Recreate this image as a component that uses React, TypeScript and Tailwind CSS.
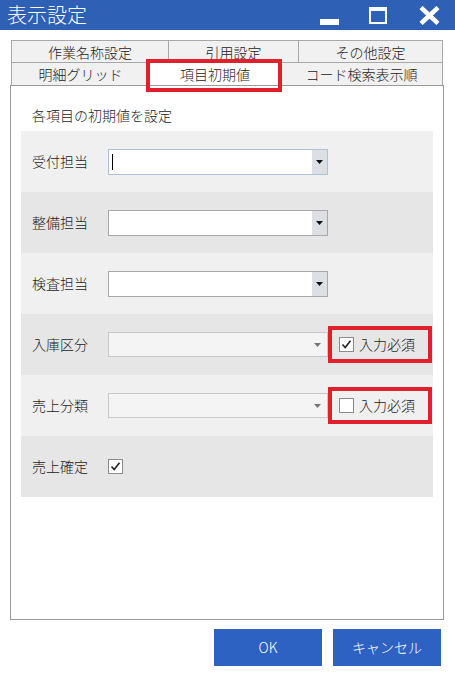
import React from 'react';

const FONT = { fontFamily: '"Noto Sans CJK JP", "Noto Sans", sans-serif' };

type Row = {
  label: string;
  kind: 'select' | 'check';
  focused?: boolean;
  disabled?: boolean;
  required?: boolean;
};

const rows: Row[] = [
  { label: '受付担当', kind: 'select', focused: true },
  { label: '整備担当', kind: 'select' },
  { label: '検査担当', kind: 'select' },
  { label: '入庫区分', kind: 'select', disabled: true, required: true },
  { label: '売上分類', kind: 'select', disabled: true, required: false },
  { label: '売上確定', kind: 'check' },
];

const Check = ({ checked }: { checked: boolean }) => (
  <div className="w-[15px] h-[15px] border border-[#8a8a8a] bg-white flex items-center justify-center">
    {checked && (
      <svg width="11" height="11" viewBox="0 0 11 11">
        <path d="M1.5 5.5 L4.2 8.5 L9.5 1.8" fill="none" stroke="#222" strokeWidth="1.6" />
      </svg>
    )}
  </div>
);

const Select = ({ focused, disabled }: { focused?: boolean; disabled?: boolean }) => {
  if (disabled) {
    return (
      <div className="w-[220px] h-[25px] border border-[#c8c8c8] bg-[#f4f4f4] flex items-center justify-end pr-[6px]">
        <svg width="7" height="4" viewBox="0 0 7 4">
          <path d="M0 0 H7 L3.5 4 Z" fill="#777" />
        </svg>
      </div>
    );
  }
  return (
    <div
      className={
        'w-[220px] h-[26px] border bg-white flex items-stretch ' +
        (focused ? 'border-[#a9c1d9]' : 'border-[#a8a8a8]')
      }
    >
      <div className="flex-1 flex items-center pl-[3px]">
        {focused && <div className="w-[1px] h-[16px] bg-black" />}
      </div>
      <div className="w-[15px] bg-[#dcdfe3] flex items-center justify-center">
        <svg width="7" height="4" viewBox="0 0 7 4">
          <path d="M0 0 H7 L3.5 4 Z" fill="#111" />
        </svg>
      </div>
    </div>
  );
};

export default function App() {
  return (
    <div className="w-[455px] h-[677px] bg-white relative overflow-hidden font-light" style={FONT}>
      {/* title bar */}
      <div className="h-[30px] bg-[#2e60b6] flex items-center justify-between">
        <span className="text-white text-[20px] leading-none pl-[7px]">表示設定</span>
        <div className="flex items-center h-full">
          <div className="w-[19px] h-[6px] bg-white mt-[14px] mr-[30px]" />
          <div className="w-[18px] h-[17px] border-2 border-t-[4px] border-white mr-[32px]" />
          <svg width="21" height="19" viewBox="0 0 21 19" className="mr-[15px]">
            <path d="M2 1.5 L19 17.5 M19 1.5 L2 17.5" stroke="#fff" strokeWidth="4.5" />
          </svg>
        </div>
      </div>

      {/* tabs */}
      <div className="mt-[10px] ml-[11px] w-[432px] text-[14px] text-[#222] leading-none">
        <div className="flex h-[22px] border border-b-0 border-[#a8a8a8]">
          <div className="w-[157px] flex items-center justify-center bg-[#f1f1f1] border-r border-[#a8a8a8]">作業名称設定</div>
          <div className="w-[130px] flex items-center justify-center bg-[#f1f1f1] border-r border-[#a8a8a8]">引用設定</div>
          <div className="flex-1 flex items-center justify-center bg-[#f1f1f1]">その他設定</div>
        </div>
        <div className="flex h-[23px] border-x border-t border-[#a8a8a8]">
          <div className="w-[137px] flex items-center justify-center bg-[#f1f1f1]">明細グリッド</div>
          <div className="w-[132px] flex items-center justify-center bg-white relative">
            項目初期値
            <div className="absolute left-[-3px] right-[-1px] top-[-4px] bottom-[-7px] border-[4px] border-[#e0202b]" />
          </div>
          <div className="flex-1 flex items-center justify-center bg-[#f1f1f1]">コード検索表示順</div>
        </div>
      </div>

      {/* panel */}
      <div className="ml-[10px] w-[434px] h-[535px] border border-[#9a9a9a] bg-white px-[10px]">
        <div className="h-[45px] flex items-center pl-[11px] text-[14px] text-[#222] pt-[14px]">各項目の初期値を設定</div>
        <div className="flex flex-col">
          {rows.map((r, i) => (
            <div
              key={r.label}
              className={'h-[61px] flex items-center pl-[11px] ' + (i % 2 === 0 ? 'bg-[#f0f0f0]' : 'bg-[#e6e6e6]')}
            >
              <span className="w-[76px] text-[14px] text-[#222]">{r.label}</span>
              {r.kind === 'select' ? (
                <>
                  <Select focused={r.focused} disabled={r.disabled} />
                  {r.required !== undefined && (
                    <div className="w-[104px] h-[37px] border-[4px] border-[#e0202b] flex items-center pl-[7px] gap-[5px]">
                      <Check checked={r.required} />
                      <span className="text-[14px] text-[#222]">入力必須</span>
                    </div>
                  )}
                </>
              ) : (
                <Check checked />
              )}
            </div>
          ))}
        </div>
      </div>

      {/* buttons */}
      <div className="flex justify-end gap-[11px] pr-[14px] mt-[9px]">
        <button className="w-[108px] h-[37px] bg-[#2e62c2] text-white text-[14px]">OK</button>
        <button className="w-[108px] h-[37px] bg-[#2e62c2] text-white text-[14px]">キャンセル</button>
      </div>
    </div>
  );
}
